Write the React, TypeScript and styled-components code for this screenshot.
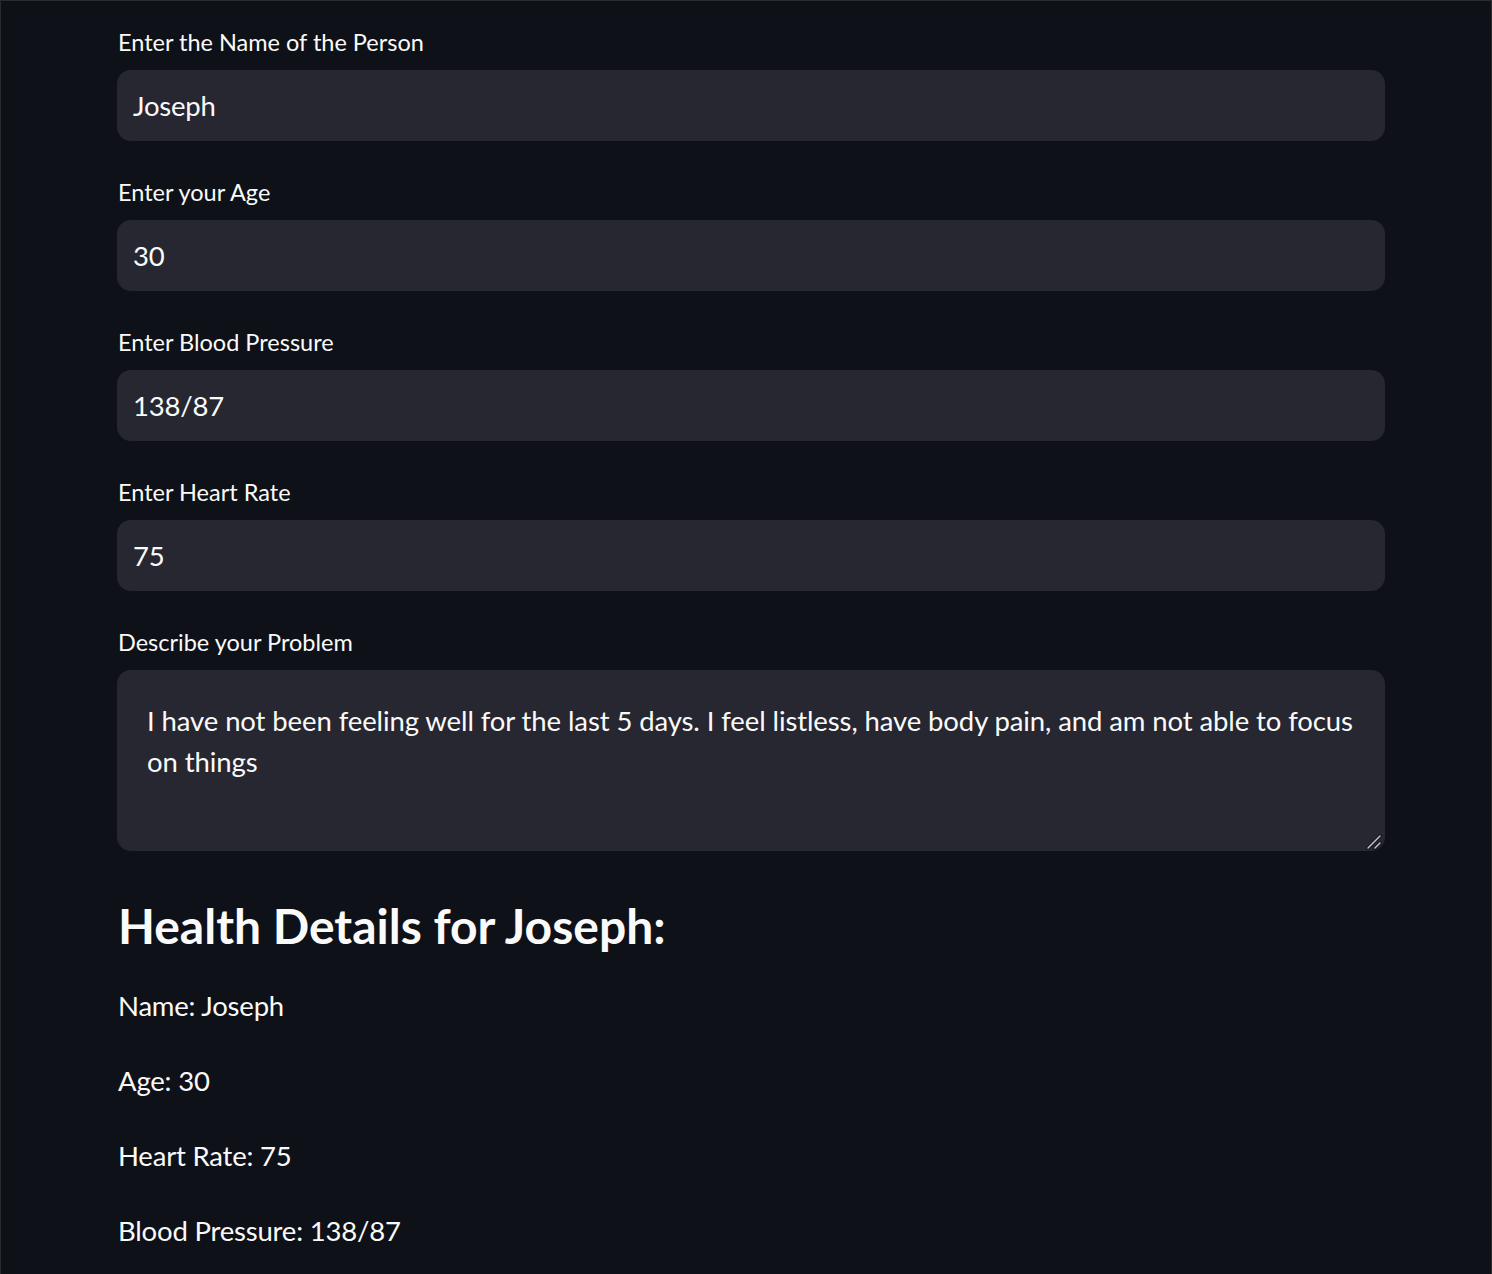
import React from "react";
import styled, { createGlobalStyle } from "styled-components";

const Global = createGlobalStyle`
  html, body {
    margin: 0;
    padding: 0;
    background: #0e1117;
    color-scheme: dark;
  }
  * { box-sizing: border-box; }
`;

const Frame = styled.div`
  min-height: 100vh;
  border: 1px solid #2a2c31;
  background: #0e1117;
  font-family: Lato, "Open Sans", sans-serif;
  color: #fafafa;
`;

const Main = styled.main`
  width: 1268px;
  margin-left: 116px;
  padding-top: 23px;
  display: flex;
  flex-direction: column;
  gap: 33px;
`;

const Field = styled.div`
  display: flex;
  flex-direction: column;
  gap: 10px;
`;

const Label = styled.label`
  font-size: 23.5px;
  line-height: 36px;
  height: 36px;
  color: #fafafa;
  padding-left: 1px;
`;

const Input = styled.input`
  height: 71px;
  width: 100%;
  border: none;
  outline: none;
  border-radius: 14px;
  background: #262730;
  color: #fafafa;
  font-family: inherit;
  font-size: 27.5px;
  letter-spacing: -0.2px;
  padding: 0 16px;
`;

const AreaWrap = styled.div`
  position: relative;
  height: 181px;
`;

const TextArea = styled.textarea`
  height: 100%;
  width: 100%;
  border: none;
  outline: none;
  border-radius: 14px;
  background: #262730;
  color: #fafafa;
  font-family: inherit;
  font-size: 27.5px;
  letter-spacing: -0.1px;
  line-height: 41px;
  padding: 30px 16px 30px 30px;
  resize: none;
  display: block;
`;

const Grip = styled.svg`
  position: absolute;
  right: 2px;
  bottom: 1px;
  width: 18px;
  height: 18px;
  pointer-events: none;
`;

const Details = styled.section`
  display: flex;
  flex-direction: column;
  padding-top: 12px;
`;

const Heading = styled.h3`
  margin: 0 0 28px 1px;
  font-size: 48px;
  line-height: 59px;
  font-weight: 700;
`;

const Line = styled.p`
  margin: 0 0 30px 1px;
  font-size: 27.5px;
  letter-spacing: -0.2px;
  line-height: 45px;
`;

const fields = [
  { label: "Enter the Name of the Person", value: "Joseph" },
  { label: "Enter your Age", value: "30" },
  { label: "Enter Blood Pressure", value: "138/87" },
  { label: "Enter Heart Rate", value: "75" },
];

export default function App() {
  return (
    <Frame>
      <Global />
      <Main>
        {fields.map((f) => (
          <Field key={f.label}>
            <Label>{f.label}</Label>
            <Input defaultValue={f.value} />
          </Field>
        ))}
        <Field>
          <Label>Describe your Problem</Label>
          <AreaWrap>
            <TextArea defaultValue="I have not been feeling well for the last 5 days. I feel listless, have body pain, and am not able to focus on things" />
            <Grip viewBox="0 0 18 18">
              <g stroke="#111318" strokeWidth="3.2" strokeLinecap="round">
                <line x1="3" y1="16" x2="15" y2="4" />
                <line x1="10" y1="16" x2="15" y2="11" />
              </g>
              <g stroke="#c4c4c8" strokeWidth="1.5" strokeLinecap="round">
                <line x1="3" y1="16" x2="15" y2="4" />
                <line x1="10" y1="16" x2="15" y2="11" />
              </g>
            </Grip>
          </AreaWrap>
        </Field>
        <Details>
          <Heading>Health Details for Joseph:</Heading>
          <Line>Name: Joseph</Line>
          <Line>Age: 30</Line>
          <Line>Heart Rate: 75</Line>
          <Line>Blood Pressure: 138/87</Line>
        </Details>
      </Main>
    </Frame>
  );
}
